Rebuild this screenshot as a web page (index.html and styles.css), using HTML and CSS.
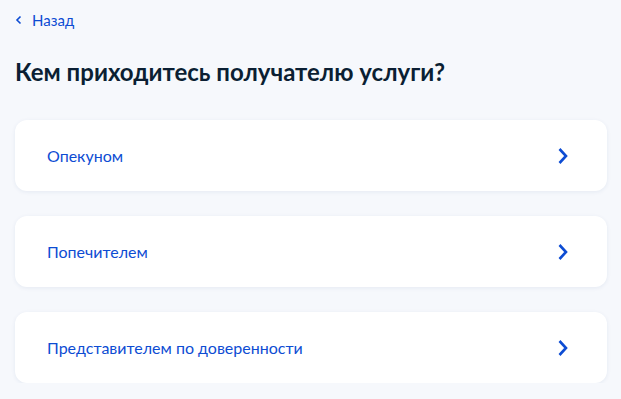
FILE: index.html
```html
<!DOCTYPE html>
<html lang="ru">
<head>
<meta charset="utf-8">
<link rel="stylesheet" href="styles.css">
</head>
<body>
<div class="page">
  <a class="back" href="#">
    <svg class="back-icon" width="8" height="10" viewBox="0 0 8 10"><path d="M5.5 1.5 L2 5 L5.5 8.5" fill="none" stroke="#0d4cd3" stroke-width="1.6"/></svg>
    <span>Назад</span>
  </a>
  <h1 class="title">Кем приходитесь получателю услуги?</h1>
  <div class="list">
    <a class="card" href="#"><span>Опекуном</span><svg class="chev" width="12" height="18" viewBox="0 0 12 18"><path d="M2.5 2 L9 9 L2.5 16" fill="none" stroke="#0d4cd3" stroke-width="2.6"/></svg></a>
    <a class="card" href="#"><span>Попечителем</span><svg class="chev" width="12" height="18" viewBox="0 0 12 18"><path d="M2.5 2 L9 9 L2.5 16" fill="none" stroke="#0d4cd3" stroke-width="2.6"/></svg></a>
    <a class="card" href="#"><span>Представителем по доверенности</span><svg class="chev" width="12" height="18" viewBox="0 0 12 18"><path d="M2.5 2 L9 9 L2.5 16" fill="none" stroke="#0d4cd3" stroke-width="2.6"/></svg></a>
  </div>
</div>
</body>
</html>
```
FILE: styles.css
```css
html, body {
  margin: 0;
  padding: 0;
  background: #f6f8fc;
  font-family: Lato, "Noto Sans", sans-serif;
}
.page {
  padding: 11px 14px 0 15px;
}
.back {
  display: flex;
  align-items: center;
  gap: 9px;
  color: #0d4cd3;
  text-decoration: none;
  font-size: 15px;
  line-height: 18px;
}
.back-icon { display: block; }
.title {
  margin: 28px 0 0;
  font-size: 24px;
  line-height: 30px;
  font-weight: 700;
  color: #0b1f33;
}
.list {
  margin-top: 33px;
  display: flex;
  flex-direction: column;
  gap: 25px;
}
.card {
  display: flex;
  align-items: center;
  justify-content: space-between;
  height: 71px;
  padding: 0 38px 0 32px;
  background: #fff;
  border-radius: 12px;
  box-shadow: 0 1px 4px rgba(28, 59, 130, 0.08);
  color: #0d4cd3;
  text-decoration: none;
  font-size: 16px;
}
.chev { display: block; }
```
